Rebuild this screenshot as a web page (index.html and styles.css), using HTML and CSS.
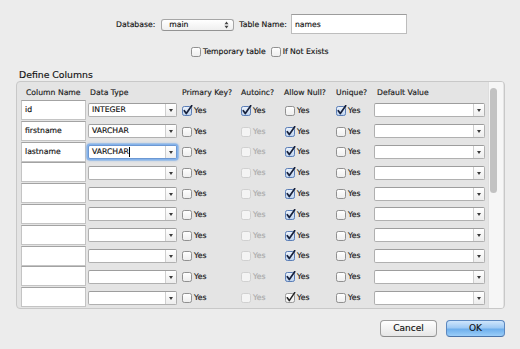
FILE: index.html
```html
<!DOCTYPE html>
<html>
<head>
<meta charset="utf-8">
<title>Create Table</title>
<link rel="stylesheet" href="styles.css">
</head>
<body>
<svg class="defs" width="0" height="0" aria-hidden="true">
  <defs>
    <linearGradient id="gbox" x1="0" y1="0" x2="0" y2="1">
      <stop offset="0" stop-color="#ffffff"/>
      <stop offset="1" stop-color="#ededed"/>
    </linearGradient>
    <linearGradient id="gon" x1="0" y1="0" x2="0" y2="1">
      <stop offset="0" stop-color="#eef4fc"/>
      <stop offset="1" stop-color="#bcd2ef"/>
    </linearGradient>
    <symbol id="cb-off" viewBox="0 0 11 11">
      <rect x="0.5" y="1.5" width="9" height="9" rx="1.8" fill="url(#gbox)" stroke="#909090"/>
    </symbol>
    <symbol id="cb-dis" viewBox="0 0 11 11">
      <rect x="0.5" y="1.5" width="9" height="9" rx="1.8" fill="#f4f4f4" stroke="#d0d0d0"/>
    </symbol>
    <symbol id="cb-on" viewBox="0 0 11 11">
      <rect x="0.5" y="1.5" width="9" height="9" rx="1.8" fill="url(#gon)" stroke="#5a7db6"/>
      <path d="M2.3 5.7 L4.3 8.6 L9.7 0.7" fill="none" stroke="#17213c" stroke-width="1.7" stroke-linecap="round" stroke-linejoin="round"/>
    </symbol>
    <symbol id="cb-on2" viewBox="0 0 11 11">
      <rect x="0.5" y="1.5" width="9" height="9" rx="1.8" fill="url(#gbox)" stroke="#9a9a9a"/>
      <path d="M2.3 5.7 L4.3 8.6 L9.7 0.7" fill="none" stroke="#222" stroke-width="1.5" stroke-linecap="round" stroke-linejoin="round"/>
    </symbol>
  </defs>
</svg>

<div class="window">
  <div class="top">
    <span class="lbl">Database:</span>
    <div class="popup">
      <span>main</span>
      <svg class="ud" width="5" height="8" viewBox="0 0 5 8"><path d="M0.5 3.2 L2.5 0.6 L4.5 3.2 Z M0.5 4.8 L2.5 7.4 L4.5 4.8 Z" fill="#444"/></svg>
    </div>
    <span class="lbl lbl2">Table Name:</span>
    <div class="field">names</div>
  </div>

  <div class="opts">
    <label class="opt"><svg class="cb"><use href="#cb-off"/></svg>Temporary table</label>
    <label class="opt opt2"><svg class="cb"><use href="#cb-off"/></svg>If Not Exists</label>
  </div>

  <div class="section">Define Columns</div>

  <div class="group">
    <div class="grid">
      <div class="head">
        <span class="h-name">Column Name</span>
        <span class="h-type">Data Type</span>
        <span>Primary Key?</span>
        <span>Autoinc?</span>
        <span class="h-null">Allow Null?</span>
        <span>Unique?</span>
        <span class="h-def">Default Value</span>
      </div>

      <div class="row">
        <div class="name">id</div>
        <div class="combo"><span class="val">INTEGER</span><span class="arr"><i></i></span></div>
        <label class="chk"><svg class="cb"><use href="#cb-on"/></svg>Yes</label>
        <label class="chk"><svg class="cb"><use href="#cb-on"/></svg>Yes</label>
        <label class="chk"><svg class="cb"><use href="#cb-off"/></svg>Yes</label>
        <label class="chk"><svg class="cb"><use href="#cb-on"/></svg>Yes</label>
        <div class="combo wide"><span class="val"></span><span class="arr"><i></i></span></div>
      </div>

      <div class="row">
        <div class="name">firstname</div>
        <div class="combo"><span class="val">VARCHAR</span><span class="arr"><i></i></span></div>
        <label class="chk"><svg class="cb"><use href="#cb-off"/></svg>Yes</label>
        <label class="chk dis"><svg class="cb"><use href="#cb-dis"/></svg>Yes</label>
        <label class="chk"><svg class="cb"><use href="#cb-on"/></svg>Yes</label>
        <label class="chk"><svg class="cb"><use href="#cb-off"/></svg>Yes</label>
        <div class="combo wide"><span class="val"></span><span class="arr"><i></i></span></div>
      </div>

      <div class="row">
        <div class="name">lastname</div>
        <div class="combo focus"><span class="val">VARCHAR<span class="caret"></span></span><span class="arr"><i></i></span></div>
        <label class="chk"><svg class="cb"><use href="#cb-off"/></svg>Yes</label>
        <label class="chk dis"><svg class="cb"><use href="#cb-dis"/></svg>Yes</label>
        <label class="chk"><svg class="cb"><use href="#cb-on"/></svg>Yes</label>
        <label class="chk"><svg class="cb"><use href="#cb-off"/></svg>Yes</label>
        <div class="combo wide"><span class="val"></span><span class="arr"><i></i></span></div>
      </div>

      <div class="row">
        <div class="name"></div>
        <div class="combo"><span class="val"></span><span class="arr"><i></i></span></div>
        <label class="chk"><svg class="cb"><use href="#cb-off"/></svg>Yes</label>
        <label class="chk dis"><svg class="cb"><use href="#cb-dis"/></svg>Yes</label>
        <label class="chk"><svg class="cb"><use href="#cb-on"/></svg>Yes</label>
        <label class="chk"><svg class="cb"><use href="#cb-off"/></svg>Yes</label>
        <div class="combo wide"><span class="val"></span><span class="arr"><i></i></span></div>
      </div>

      <div class="row">
        <div class="name"></div>
        <div class="combo"><span class="val"></span><span class="arr"><i></i></span></div>
        <label class="chk"><svg class="cb"><use href="#cb-off"/></svg>Yes</label>
        <label class="chk dis"><svg class="cb"><use href="#cb-dis"/></svg>Yes</label>
        <label class="chk"><svg class="cb"><use href="#cb-on"/></svg>Yes</label>
        <label class="chk"><svg class="cb"><use href="#cb-off"/></svg>Yes</label>
        <div class="combo wide"><span class="val"></span><span class="arr"><i></i></span></div>
      </div>

      <div class="row">
        <div class="name"></div>
        <div class="combo"><span class="val"></span><span class="arr"><i></i></span></div>
        <label class="chk"><svg class="cb"><use href="#cb-off"/></svg>Yes</label>
        <label class="chk dis"><svg class="cb"><use href="#cb-dis"/></svg>Yes</label>
        <label class="chk"><svg class="cb"><use href="#cb-on"/></svg>Yes</label>
        <label class="chk"><svg class="cb"><use href="#cb-off"/></svg>Yes</label>
        <div class="combo wide"><span class="val"></span><span class="arr"><i></i></span></div>
      </div>

      <div class="row">
        <div class="name"></div>
        <div class="combo"><span class="val"></span><span class="arr"><i></i></span></div>
        <label class="chk"><svg class="cb"><use href="#cb-off"/></svg>Yes</label>
        <label class="chk dis"><svg class="cb"><use href="#cb-dis"/></svg>Yes</label>
        <label class="chk"><svg class="cb"><use href="#cb-on"/></svg>Yes</label>
        <label class="chk"><svg class="cb"><use href="#cb-off"/></svg>Yes</label>
        <div class="combo wide"><span class="val"></span><span class="arr"><i></i></span></div>
      </div>

      <div class="row">
        <div class="name"></div>
        <div class="combo"><span class="val"></span><span class="arr"><i></i></span></div>
        <label class="chk"><svg class="cb"><use href="#cb-off"/></svg>Yes</label>
        <label class="chk dis"><svg class="cb"><use href="#cb-dis"/></svg>Yes</label>
        <label class="chk"><svg class="cb"><use href="#cb-on"/></svg>Yes</label>
        <label class="chk"><svg class="cb"><use href="#cb-off"/></svg>Yes</label>
        <div class="combo wide"><span class="val"></span><span class="arr"><i></i></span></div>
      </div>

      <div class="row">
        <div class="name"></div>
        <div class="combo"><span class="val"></span><span class="arr"><i></i></span></div>
        <label class="chk"><svg class="cb"><use href="#cb-off"/></svg>Yes</label>
        <label class="chk dis"><svg class="cb"><use href="#cb-dis"/></svg>Yes</label>
        <label class="chk"><svg class="cb"><use href="#cb-on"/></svg>Yes</label>
        <label class="chk"><svg class="cb"><use href="#cb-off"/></svg>Yes</label>
        <div class="combo wide"><span class="val"></span><span class="arr"><i></i></span></div>
      </div>

      <div class="row">
        <div class="name"></div>
        <div class="combo"><span class="val"></span><span class="arr"><i></i></span></div>
        <label class="chk"><svg class="cb"><use href="#cb-off"/></svg>Yes</label>
        <label class="chk dis"><svg class="cb"><use href="#cb-dis"/></svg>Yes</label>
        <label class="chk"><svg class="cb"><use href="#cb-on2"/></svg>Yes</label>
        <label class="chk"><svg class="cb"><use href="#cb-off"/></svg>Yes</label>
        <div class="combo wide"><span class="val"></span><span class="arr"><i></i></span></div>
      </div>
    </div>
    <div class="scroll"><div class="thumb"></div></div>
  </div>

  <div class="buttons">
    <button class="btn">Cancel</button>
    <button class="btn ok">OK</button>
  </div>
</div>
</body>
</html>
```

FILE: styles.css
```css
html, body {
  margin: 0;
  padding: 0;
}
body {
  background: #ececec;
  font-family: "DejaVu Sans", "Noto Sans", sans-serif;
  font-size: 7.7px;
  color: #111;
  -webkit-text-stroke: 0.15px currentColor;
}
.defs {
  display: block;
  width: 0;
  height: 0;
  overflow: hidden;
}
.window {
  width: 520px;
  height: 349px;
  box-sizing: border-box;
  padding: 14px 15px 0 16px;
  overflow: hidden;
}

/* top row */
.top {
  display: flex;
  align-items: center;
  height: 20px;
  padding-left: 100px;
}
.popup {
  margin-left: 6px;
  margin-top: 2px;
  width: 73px;
  height: 12px;
  box-sizing: border-box;
  border: 1px solid #a6a6a6;
  border-bottom-color: #939393;
  border-radius: 3px;
  background: linear-gradient(#ffffff, #efefef);
  display: flex;
  align-items: center;
  padding-left: 7px;
  line-height: 10px;
}
.popup .ud {
  margin-left: auto;
  margin-right: 4px;
}
.lbl2 {
  margin-left: 5px;
}
.field {
  margin-left: 4px;
  width: 116px;
  height: 20px;
  box-sizing: border-box;
  border: 1px solid #bdbdbd;
  border-top-color: #9c9c9c;
  background: #fff;
  padding-left: 3px;
  line-height: 19px;
}

/* options */
.opts {
  display: flex;
  align-items: center;
  height: 11px;
  margin-top: 12px;
  padding-left: 175px;
}
.opt {
  display: flex;
  align-items: center;
  line-height: 11px;
}
.opt2 {
  margin-left: 5px;
}
.cb {
  width: 11px;
  height: 11px;
  flex: none;
}
.opt .cb {
  margin-right: 1px;
}

.section {
  margin-top: 12px;
  padding-left: 3px;
  font-size: 9.3px;
  line-height: 12px;
  height: 12px;
  color: #111;
}

/* group box */
.group {
  display: flex;
  width: 489px;
  height: 228px;
  box-sizing: border-box;
  border: 1px solid #c8c8c8;
  border-radius: 4px;
  background: #e4e4e4;
  overflow: hidden;
}
.grid {
  width: 469px;
  flex: none;
  box-sizing: border-box;
  padding: 4px 0 0 4px;
}
.head,
.row {
  display: grid;
  grid-template-columns: 67px 94px 59px 44px 51px 38px 112px;
}
.head {
  height: 14px;
  line-height: 14px;
  color: #1a1a1a;
}
.h-name { padding-left: 5px; }
.h-type { padding-left: 2px; }
.h-null { margin-left: -1px; }
.h-def { padding-left: 3px; }

.row {
  height: 20.8px;
  align-items: center;
}
.name {
  align-self: start;
  width: 65px;
  height: 20px;
  box-sizing: border-box;
  background: #fff;
  border: 1px solid #c4c4c4;
  border-top-color: #a3a3a3;
  padding-left: 3px;
  line-height: 18px;
}
.combo {
  width: 89px;
  height: 14px;
  box-sizing: border-box;
  border: 1px solid #b0b0b0;
  border-top-color: #9d9d9d;
  border-radius: 2px;
  background: #fff;
  display: flex;
}
.combo.wide {
  width: 111px;
}
.combo.focus {
  box-shadow: 0 0 0 1.5px #86b3ea, 0 0 2px 2px rgba(110, 160, 225, 0.45);
  border-color: #6c98d3;
}
.combo .val {
  flex: 1;
  padding-left: 3px;
  line-height: 12px;
  display: flex;
  align-items: center;
}
.caret {
  display: inline-block;
  width: 0;
  height: 10px;
  border-left: 1px solid #000;
  margin-left: 0.5px;
}
.combo .arr {
  width: 10px;
  flex: none;
  border-left: 1px solid #cfcfcf;
  background: linear-gradient(#ffffff, #ededed);
  border-radius: 0 1px 1px 0;
  display: flex;
  align-items: center;
  justify-content: center;
}
.combo .arr i {
  display: block;
  width: 0;
  height: 0;
  border-left: 2.5px solid transparent;
  border-right: 2.5px solid transparent;
  border-top: 3px solid #3a3a3a;
  margin-top: 1px;
}
.chk {
  display: flex;
  align-items: center;
  line-height: 11px;
  color: #111;
}
.chk .cb {
  margin-right: 1px;
}
.chk.dis {
  color: #a9a9a9;
}

/* scrollbar */
.scroll {
  width: 15px;
  flex: none;
  margin-left: 2px;
  box-sizing: border-box;
  background: #f6f6f6;
  border-left: 1px solid #dedede;
  padding: 6px 0 0 1px;
}
.thumb {
  width: 7px;
  height: 105px;
  border-radius: 4px;
  background: #c2c2c2;
}

/* buttons */
.buttons {
  display: flex;
  justify-content: flex-end;
  gap: 9px;
  margin-top: 11px;
}
.btn {
  height: 17px;
  box-sizing: border-box;
  border: 1px solid #9d9d9d;
  border-bottom-color: #8a8a8a;
  border-radius: 4px;
  background: linear-gradient(#ffffff, #f1f1f1 55%, #e6e6e6);
  font-family: "DejaVu Sans", "Noto Sans", sans-serif;
  font-size: 9px;
  color: #111;
  -webkit-text-stroke: 0.15px currentColor;
  padding: 0;
  width: 57px;
  line-height: 15px;
}
.btn.ok {
  width: 59px;
  border-color: #5b87bf;
  border-bottom-color: #4a73a8;
  background: linear-gradient(#cfe6fc, #9fcaf4 45%, #6eafec 55%, #9bcdf8);
  color: #111;
}
```
